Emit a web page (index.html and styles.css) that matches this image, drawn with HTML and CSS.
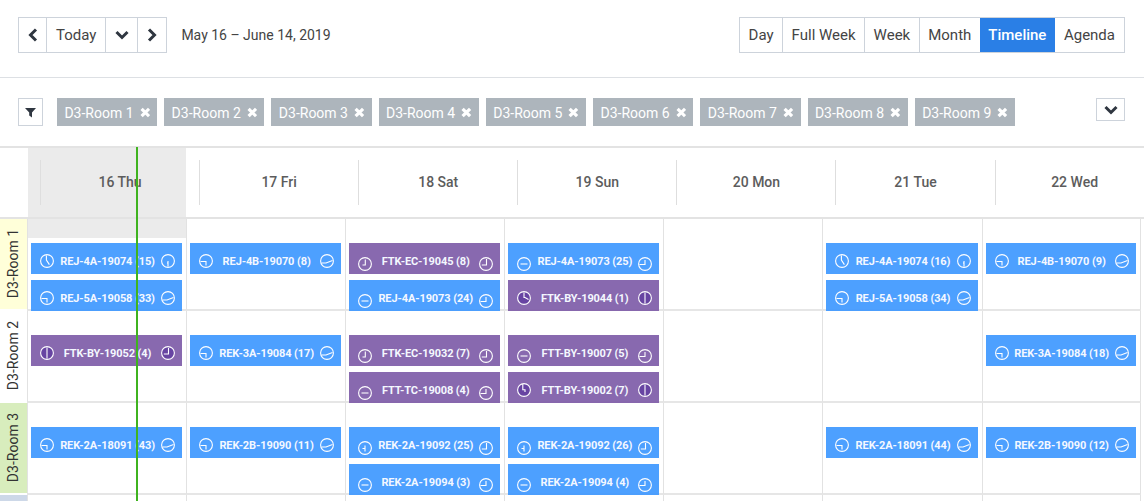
FILE: index.html
```html
<!DOCTYPE html>
<html>
<head>
  <title>Room Timeline</title>
  <link rel="stylesheet" href="styles.css">
</head>
<body>
  <svg class="defs" width="0" height="0">
    <symbol id="clockA" viewBox="0 0 14 14"><circle cx="7" cy="7" r="6.4"/><path d="M6.4 1.5V6L9.4 10.6"/></symbol>
    <symbol id="clockB" viewBox="0 0 14 14"><circle cx="7" cy="7" r="6.4"/><path d="M7 7V12.4M6 9H7"/></symbol>
    <symbol id="clockC" viewBox="0 0 14 14"><circle cx="7" cy="7" r="6.4"/><path d="M1.5 7.5H7V11.5"/></symbol>
    <symbol id="clockD" viewBox="0 0 14 14"><circle cx="7" cy="7" r="6.4"/><path d="M1.5 9H6L12.5 6.5"/></symbol>
    <symbol id="clockE" viewBox="0 0 14 14"><circle cx="7" cy="7" r="6.4"/><path d="M7.3 2.5V8H4.5"/></symbol>
    <symbol id="clockF" viewBox="0 0 14 14"><circle cx="7" cy="7" r="6.4"/><path d="M3.5 7H10.5"/></symbol>
    <symbol id="clockG" viewBox="0 0 14 14"><circle cx="7" cy="7" r="6.4"/><path d="M1.5 7.5H7V3"/></symbol>
    <symbol id="clockH" viewBox="0 0 14 14"><circle cx="7" cy="7" r="6.4"/><path d="M7 1.5V6.5H8L11.5 8.5"/></symbol>
    <symbol id="clockI" viewBox="0 0 14 14"><circle cx="7" cy="7" r="6.4"/><path d="M7 1.5V12.5"/></symbol>
    <symbol id="clockJ" viewBox="0 0 14 14"><circle cx="7" cy="7" r="6.4"/><path d="M7.5 2V8H2.8"/></symbol>
    <symbol id="clockK" viewBox="0 0 14 14"><circle cx="7" cy="7" r="6.4"/><path d="M5.8 1V6.8L8 6.8V9"/></symbol>
    <symbol id="clockL" viewBox="0 0 14 14"><circle cx="7" cy="7" r="6.4"/><path d="M7 4.5V10.5M4.5 7.5H7"/></symbol>
  </svg>

  <header class="toolbar">
    <div class="btnGroup navGroup">
      <button class="btn iconBtn"><svg class="chev" width="10" height="14" viewBox="0 0 10 14"><path d="M8 1.5L2.5 7L8 12.5"/></svg></button>
      <button class="btn">Today</button>
      <button class="btn iconBtn wide"><svg class="chev" width="14" height="10" viewBox="0 0 14 10"><path d="M1.5 2L7 7.5L12.5 2"/></svg></button>
      <button class="btn iconBtn"><svg class="chev" width="10" height="14" viewBox="0 0 10 14"><path d="M2 1.5L7.5 7L2 12.5"/></svg></button>
    </div>
    <span class="dateRange">May 16 – June 14, 2019</span>
    <div class="btnGroup viewSwitch">
      <button class="btn">Day</button>
      <button class="btn">Full Week</button>
      <button class="btn">Week</button>
      <button class="btn">Month</button>
      <button class="btn active">Timeline</button>
      <button class="btn">Agenda</button>
    </div>
  </header>

  <section class="filterBar">
    <button class="filterBtn"><svg width="11" height="11" viewBox="0 0 11 11"><path d="M0 1H11L7 5.5V10.5L4.2 8.6V5.5Z"/></svg></button>
    <div class="chips">
      <span class="chip">D3-Room 1 <svg class="chipX" viewBox="0 0 10 10"><path d="M1.5 1.5L8.5 8.5M8.5 1.5L1.5 8.5"/></svg></span>
      <span class="chip">D3-Room 2 <svg class="chipX" viewBox="0 0 10 10"><path d="M1.5 1.5L8.5 8.5M8.5 1.5L1.5 8.5"/></svg></span>
      <span class="chip">D3-Room 3 <svg class="chipX" viewBox="0 0 10 10"><path d="M1.5 1.5L8.5 8.5M8.5 1.5L1.5 8.5"/></svg></span>
      <span class="chip">D3-Room 4 <svg class="chipX" viewBox="0 0 10 10"><path d="M1.5 1.5L8.5 8.5M8.5 1.5L1.5 8.5"/></svg></span>
      <span class="chip">D3-Room 5 <svg class="chipX" viewBox="0 0 10 10"><path d="M1.5 1.5L8.5 8.5M8.5 1.5L1.5 8.5"/></svg></span>
      <span class="chip">D3-Room 6 <svg class="chipX" viewBox="0 0 10 10"><path d="M1.5 1.5L8.5 8.5M8.5 1.5L1.5 8.5"/></svg></span>
      <span class="chip">D3-Room 7 <svg class="chipX" viewBox="0 0 10 10"><path d="M1.5 1.5L8.5 8.5M8.5 1.5L1.5 8.5"/></svg></span>
      <span class="chip">D3-Room 8 <svg class="chipX" viewBox="0 0 10 10"><path d="M1.5 1.5L8.5 8.5M8.5 1.5L1.5 8.5"/></svg></span>
      <span class="chip">D3-Room 9 <svg class="chipX" viewBox="0 0 10 10"><path d="M1.5 1.5L8.5 8.5M8.5 1.5L1.5 8.5"/></svg></span>
    </div>
    <button class="expandBtn"><svg class="chev" width="14" height="10" viewBox="0 0 14 10"><path d="M1.5 2L7 7.5L12.5 2"/></svg></button>
  </section>

  <main class="timeline">
    <div class="nowLine"></div>

    <div class="dayHead">
      <div class="dayName">16 Thu</div>
      <div class="dayName">17 Fri</div>
      <div class="dayName">18 Sat</div>
      <div class="dayName">19 Sun</div>
      <div class="dayName">20 Mon</div>
      <div class="dayName">21 Tue</div>
      <div class="dayName">22 Wed</div>
    </div>

    <div class="room">
      <div class="roomName yellow"><span>D3-Room 1</span></div>
      <div class="cell today">
        <div class="event blue"><svg class="clock"><use href="#clockA"/></svg><span>REJ-4A-19074 (15)</span><svg class="clock"><use href="#clockB"/></svg></div>
        <div class="event blue"><svg class="clock"><use href="#clockC"/></svg><span>REJ-5A-19058 (33)</span><svg class="clock"><use href="#clockD"/></svg></div>
      </div>
      <div class="cell">
        <div class="event blue"><svg class="clock"><use href="#clockC"/></svg><span>REJ-4B-19070 (8)</span><svg class="clock"><use href="#clockD"/></svg></div>
      </div>
      <div class="cell low">
        <div class="event purple"><svg class="clock"><use href="#clockE"/></svg><span>FTK-EC-19045 (8)</span><svg class="clock"><use href="#clockJ"/></svg></div>
        <div class="event blue"><svg class="clock"><use href="#clockF"/></svg><span>REJ-4A-19073 (24)</span><svg class="clock"><use href="#clockG"/></svg></div>
      </div>
      <div class="cell low">
        <div class="event blue"><svg class="clock"><use href="#clockF"/></svg><span>REJ-4A-19073 (25)</span><svg class="clock"><use href="#clockG"/></svg></div>
        <div class="event purple high"><svg class="clock dark"><use href="#clockH"/></svg><span>FTK-BY-19044 (1)</span><svg class="clock dark"><use href="#clockI"/></svg></div>
      </div>
      <div class="cell"></div>
      <div class="cell">
        <div class="event blue"><svg class="clock"><use href="#clockA"/></svg><span>REJ-4A-19074 (16)</span><svg class="clock"><use href="#clockB"/></svg></div>
        <div class="event blue"><svg class="clock"><use href="#clockC"/></svg><span>REJ-5A-19058 (34)</span><svg class="clock"><use href="#clockD"/></svg></div>
      </div>
      <div class="cell">
        <div class="event blue"><svg class="clock"><use href="#clockC"/></svg><span>REJ-4B-19070 (9)</span><svg class="clock"><use href="#clockD"/></svg></div>
      </div>
    </div>

    <div class="room">
      <div class="roomName"><span>D3-Room 2</span></div>
      <div class="cell">
        <div class="event purple"><svg class="clock dark"><use href="#clockI"/></svg><span>FTK-BY-19052 (4)</span><svg class="clock dark"><use href="#clockJ"/></svg></div>
      </div>
      <div class="cell">
        <div class="event blue"><svg class="clock"><use href="#clockC"/></svg><span>REK-3A-19084 (17)</span><svg class="clock"><use href="#clockD"/></svg></div>
      </div>
      <div class="cell low">
        <div class="event purple"><svg class="clock"><use href="#clockE"/></svg><span>FTK-EC-19032 (7)</span><svg class="clock"><use href="#clockJ"/></svg></div>
        <div class="event purple"><svg class="clock"><use href="#clockF"/></svg><span>FTT-TC-19008 (4)</span><svg class="clock"><use href="#clockG"/></svg></div>
      </div>
      <div class="cell low">
        <div class="event purple"><svg class="clock"><use href="#clockF"/></svg><span>FTT-BY-19007 (5)</span><svg class="clock"><use href="#clockG"/></svg></div>
        <div class="event purple high"><svg class="clock dark"><use href="#clockK"/></svg><span>FTT-BY-19002 (7)</span><svg class="clock dark"><use href="#clockI"/></svg></div>
      </div>
      <div class="cell"></div>
      <div class="cell"></div>
      <div class="cell">
        <div class="event blue"><svg class="clock"><use href="#clockC"/></svg><span>REK-3A-19084 (18)</span><svg class="clock"><use href="#clockD"/></svg></div>
      </div>
    </div>

    <div class="room">
      <div class="roomName green"><span>D3-Room 3</span></div>
      <div class="cell">
        <div class="event blue"><svg class="clock"><use href="#clockC"/></svg><span>REK-2A-18091 (43)</span><svg class="clock"><use href="#clockD"/></svg></div>
      </div>
      <div class="cell">
        <div class="event blue"><svg class="clock"><use href="#clockC"/></svg><span>REK-2B-19090 (11)</span><svg class="clock"><use href="#clockD"/></svg></div>
      </div>
      <div class="cell low">
        <div class="event blue"><svg class="clock"><use href="#clockL"/></svg><span>REK-2A-19092 (25)</span><svg class="clock"><use href="#clockJ"/></svg></div>
        <div class="event blue"><svg class="clock"><use href="#clockF"/></svg><span>REK-2A-19094 (3)</span><svg class="clock"><use href="#clockG"/></svg></div>
      </div>
      <div class="cell low">
        <div class="event blue"><svg class="clock"><use href="#clockL"/></svg><span>REK-2A-19092 (26)</span><svg class="clock"><use href="#clockJ"/></svg></div>
        <div class="event blue"><svg class="clock"><use href="#clockF"/></svg><span>REK-2A-19094 (4)</span><svg class="clock"><use href="#clockG"/></svg></div>
      </div>
      <div class="cell"></div>
      <div class="cell">
        <div class="event blue"><svg class="clock"><use href="#clockC"/></svg><span>REK-2A-18091 (44)</span><svg class="clock"><use href="#clockD"/></svg></div>
      </div>
      <div class="cell">
        <div class="event blue"><svg class="clock"><use href="#clockC"/></svg><span>REK-2B-19090 (12)</span><svg class="clock"><use href="#clockD"/></svg></div>
      </div>
    </div>

    <div class="room">
      <div class="roomName blueGrey"></div>
      <div class="cell"></div>
      <div class="cell"></div>
      <div class="cell"></div>
      <div class="cell"></div>
      <div class="cell"></div>
      <div class="cell"></div>
      <div class="cell"></div>
    </div>
  </main>
</body>
</html>
```

FILE: styles.css
```css
html, body {
  margin: 0;
  height: 100%;
  overflow: hidden;
  background: white;
  font-family: Roboto, "Liberation Sans", sans-serif;
  color: #444;
}

.defs {
  display: block;
  height: 0;
}

.toolbar {
  display: flex;
  align-items: flex-start;
  height: 60px;
  padding: 17px 19px 0 18px;
  border-bottom: 1px solid #dde0e4;
}

.btnGroup {
  display: flex;
  height: 36px;
  box-sizing: border-box;
  border: 1px solid #cdd3db;
}

.btn {
  padding: 0 8.5px;
  border: 0;
  border-left: 1px solid #cdd3db;
  background: white;
  font: 15px Roboto, sans-serif;
  color: #444;
}

.btn:first-child {
  border-left: 0;
}

.navGroup .btn {
  padding: 0 9px;
}

.btn.active {
  background: #2a7fe6;
  color: white;
  font-weight: 500;
  border-left: 0;
}

.btn.active + .btn {
  padding: 0 9px;
  border-left: 0;
}

.navGroup .iconBtn {
  display: flex;
  align-items: center;
  justify-content: center;
  width: 29px;
  padding: 0;
}

.navGroup .iconBtn:first-child {
  width: 27px;
}

.navGroup .iconBtn.wide {
  width: 32px;
}

.chev {
  fill: none;
  stroke: #2f3640;
  stroke-width: 3;
}

.dateRange {
  margin-left: 14px;
  line-height: 36px;
  font-size: 14px;
}

.viewSwitch {
  margin-left: auto;
}

.filterBar {
  display: flex;
  align-items: flex-start;
  height: 68px;
  padding: 20px 19px 0 18px;
  box-sizing: border-box;
}

.filterBtn {
  display: flex;
  align-items: center;
  justify-content: center;
  width: 25px;
  height: 28px;
  padding: 0;
  border: 1px solid #cdd3db;
  background: white;
}

.filterBtn path {
  fill: #2f3640;
}

.chips {
  display: flex;
  gap: 7px;
  margin-left: 14px;
}

.chip {
  display: flex;
  align-items: center;
  gap: 6px;
  height: 28px;
  box-sizing: border-box;
  padding: 1px 7px 0 7.4px;
  background: #adb5bc;
  color: white;
  font-size: 14px;
}

.chipX {
  width: 10.7px;
  height: 11px;
  fill: none;
  stroke: white;
  stroke-width: 3;
}

.expandBtn {
  display: flex;
  align-items: center;
  justify-content: center;
  width: 29px;
  height: 23px;
  margin-left: auto;
  padding: 0;
  border: 1px solid #cdd3db;
  background: white;
}

.timeline {
  position: relative;
  height: 355px;
  overflow: hidden;
}

.nowLine {
  position: absolute;
  left: 136px;
  top: 1px;
  bottom: 0;
  width: 2px;
  background: #3fb31f;
  z-index: 5;
}

.dayHead {
  display: flex;
  height: 69px;
  padding-left: 40px;
  border-top: 2px solid #e3e3e3;
  border-bottom: 2px solid #e3e3e3;
  background: linear-gradient(#ebebeb, #ebebeb) 28px 0 / 158px 100% no-repeat;
}

.dayName {
  flex: 0 0 159.1px;
  box-sizing: border-box;
  margin: 12px 0;
  border-left: 1px solid #dedede;
  text-align: center;
  line-height: 44px;
  font-size: 14px;
  font-weight: 500;
  color: #5c5c5c;
}

.room {
  display: grid;
  grid-template-columns: 27px repeat(7, 159.1px);
  height: 92px;
}

.roomName {
  display: flex;
  align-items: center;
  justify-content: center;
  height: 90px;
  padding-right: 1px;
}

.roomName span {
  writing-mode: vertical-rl;
  transform: rotate(180deg);
  font-size: 14px;
  color: #333;
}

.yellow { background: #ffffd9; }
.green { background: #d8edbd; }
.blueGrey { background: #cdd8e8; }

.cell {
  box-sizing: border-box;
  display: flex;
  flex-direction: column;
  gap: 6px;
  height: 92px;
  padding: 24px 4px 0 3px;
  border-left: 1px solid #e2e2e2;
  border-bottom: 2px solid #e6e6e6;
}

.cell:last-child {
  border-right: 1px solid #e2e2e2;
}

.today {
  background: linear-gradient(#ebebeb, #ebebeb) 0 0 / 100% 19px no-repeat;
}

.event {
  flex: none;
  display: flex;
  align-items: center;
  justify-content: space-between;
  box-sizing: border-box;
  height: 31px;
  padding: 5px 7px 0 9px;
  font-size: 11px;
  font-weight: 700;
  letter-spacing: -.1px;
  color: #f4f8ff;
  white-space: nowrap;
  opacity: .95;
}

.event.blue { background: #449bff; }
.event.purple { background: #8261ab; }

.clock {
  flex: none;
  width: 14px;
  height: 14px;
  fill: none;
  stroke: white;
  stroke-width: 1.1;
}

.clock.dark {
  fill: #5f3a9e;
}

.low .clock {
  margin-top: 6px;
}

.low .high .clock {
  margin-top: 0;
}
```
